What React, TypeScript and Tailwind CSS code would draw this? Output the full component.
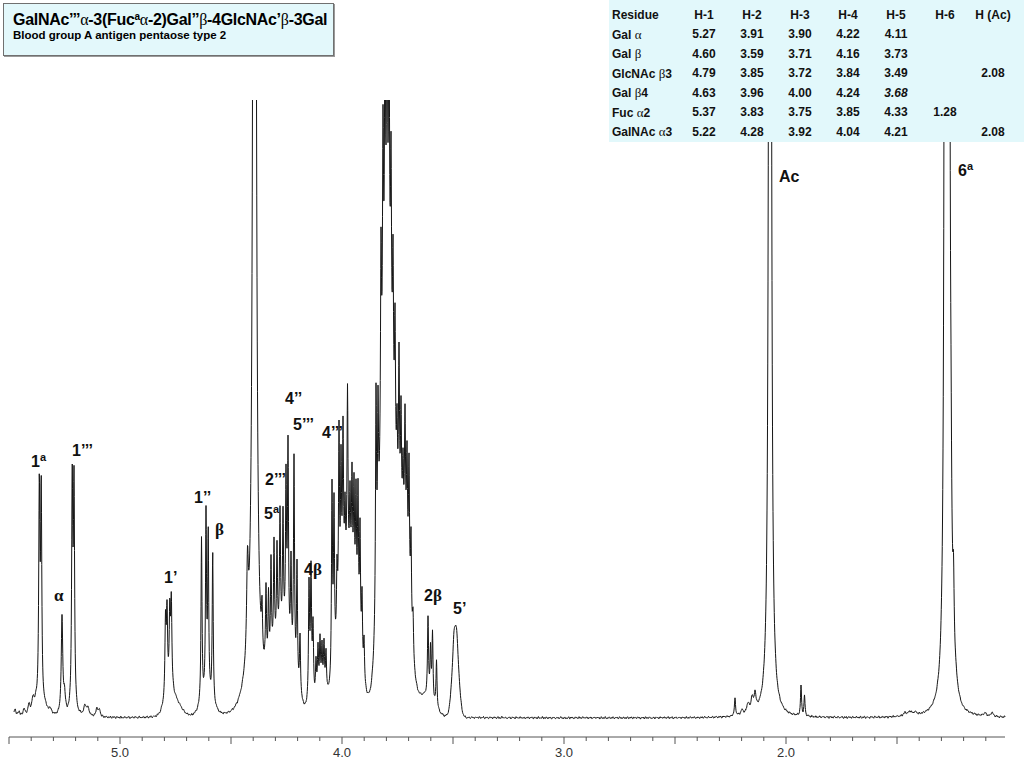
import { useMemo } from "react";

type Peak = [number, number, number];

// [x, height, half-width] in page pixels
const lines: Peak[] = [
  [15, 8, 1.2], [19, 5, 1], [24, 7, 1.2], [29, 10, 1.3], [33, 14, 1.5],
  [36, 10, 2], [39.3, 215, 0.7], [41.2, 215, 0.7], [45, 8, 2], [50, 6, 2],
  [62, 97, 0.9], [64.5, 18, 1],
  [72.2, 222, 0.7], [74, 222, 0.7],
  [85, 10, 1.5], [88, 8, 1.5], [97, 9, 1.2], [99.5, 7, 1],
  [165.5, 75, 0.7], [167, 80, 0.7], [169.8, 76, 0.7], [171.3, 86, 0.7],
  [201.5, 165, 0.6], [206, 180, 0.6], [208.2, 160, 0.6], [212.7, 150, 0.6],
  [247.5, 90, 1], [254.5, 3000, 1],
  [262, 45, 0.6], [266, 80, 0.6], [268.5, 70, 0.6], [271, 100, 0.6], [274, 110, 0.6],
  [277, 95, 0.6], [280, 125, 0.6], [283, 120, 0.6], [286, 160, 0.6], [288, 198, 0.6],
  [291, 95, 0.6], [294, 215, 0.6], [297, 120, 0.6], [300, 60, 0.6],
  [309, 110, 0.6], [311, 115, 0.6], [313, 65, 0.6],
  [316, 35, 0.6], [318, 45, 0.6], [320, 50, 0.6], [322, 42, 0.6], [324, 46, 0.6], [326, 40, 0.6],
  [332, 190, 0.6], [334, 160, 0.6], [337, 70, 0.6], [339, 190, 0.6], [341, 140, 0.6],
  [343, 160, 0.6], [345, 70, 0.6], [347.5, 185, 0.6], [350, 80, 0.6], [352, 110, 0.6],
  [354, 110, 0.6], [356, 120, 0.6], [358, 140, 0.6], [360, 120, 0.6], [362, 70, 0.6], [364, 40, 0.6],
  [376, 220, 0.6], [378, 150, 0.6], [381, 200, 0.6], [383, 240, 0.6], [385, 300, 0.6],
  [387, 320, 0.6], [389, 300, 0.6], [391, 200, 0.6], [393, 160, 0.6], [395, 150, 0.6],
  [397, 80, 0.6], [399, 170, 0.6], [401, 120, 0.6], [403, 70, 0.6], [405, 130, 0.6],
  [407, 110, 0.6], [409, 130, 0.6], [411, 90, 0.6], [413, 40, 0.6],
  [428, 78, 0.6], [430.5, 48, 0.6], [432.5, 68, 0.6], [436.5, 48, 0.6],
  [454, 10, 1], [456.5, 8, 1],
  [735, 17, 0.7], [742, 5, 1.5], [748, 10, 1.5], [752, 14, 1.2], [755, 17, 1.2],
  [770, 4000, 0.7],
  [801, 30, 0.6], [804.5, 20, 0.6],
  [905, 3, 2], [910, 4, 2], [915, 3, 2],
  [945.5, 4000, 0.6], [948.5, 4000, 0.6], [951, 80, 0.7], [953.5, 60, 0.7],
  [985, 3, 1.5], [992, 4, 1.5],
];

// broad humps under the multiplets
const humps: Peak[] = [
  [169, 15, 5], [176, 12, 6], [207, 15, 6], [252, 25, 8],
  [282, 70, 10], [311, 20, 2], [321, 20, 5], [348, 130, 9],
  [387, 380, 6.5], [404, 150, 6], [425, 20, 8], [455.5, 85, 3], [951, 25, 4],
];

const BASE = 718;
const TOP = 100;

const signal = (x: number, rnd: () => number) => {
  let v = 0;
  for (const [x0, h, w] of lines) {
    const dx = x - x0;
    v += (h * w * w) / (dx * dx + w * w);
  }
  for (const [x0, h, s] of humps) {
    const dx = x - x0;
    v += h * Math.exp(-(dx * dx) / (2 * s * s));
  }
  const noise = 0.5 * Math.sin(x * 1.7) + 0.4 * Math.sin(x * 3.1 + 1) + (rnd() - 0.5) * 0.9;
  return BASE - v + noise;
};

const buildTrace = () => {
  let seed = 7;
  const rnd = () => {
    seed = (seed * 1103515245 + 12345) % 2147483648;
    return seed / 2147483648;
  };
  let d = "";
  let prevX = 14;
  let prevY = signal(14, rnd);
  let pen = prevY >= TOP;
  if (pen) d += `M${prevX} ${prevY.toFixed(2)}`;
  for (let x = 14.25; x <= 1005; x += 0.25) {
    const y = signal(x, rnd);
    if (y >= TOP) {
      if (!pen) {
        const cx = prevX + ((TOP - prevY) / (y - prevY)) * (x - prevX);
        d += `M${cx.toFixed(2)} ${TOP}`;
        pen = true;
      }
      d += `L${x.toFixed(2)} ${y.toFixed(2)}`;
    } else if (pen) {
      const cx = prevX + ((prevY - TOP) / (prevY - y)) * (x - prevX);
      d += `L${cx.toFixed(2)} ${TOP}`;
      pen = false;
    }
    prevX = x;
    prevY = y;
  }
  return d;
};

const ticks = Array.from({ length: 45 }, (_, i) => i);
const axisLabels = [
  { x: 120, t: "5.0" },
  { x: 342, t: "4.0" },
  { x: 564, t: "3.0" },
  { x: 786, t: "2.0" },
];

const Gk = ({ children }: { children: string }) => (
  <span className="font-['Liberation_Serif',serif] font-normal">{children}</span>
);

const rows: { name: string; greek: string; suffix: string; v: string[] }[] = [
  { name: "Gal ", greek: "α", suffix: "", v: ["5.27", "3.91", "3.90", "4.22", "4.11", "", ""] },
  { name: "Gal ", greek: "β", suffix: "", v: ["4.60", "3.59", "3.71", "4.16", "3.73", "", ""] },
  { name: "GlcNAc ", greek: "β", suffix: "3", v: ["4.79", "3.85", "3.72", "3.84", "3.49", "", "2.08"] },
  { name: "Gal ", greek: "β", suffix: "4", v: ["4.63", "3.96", "4.00", "4.24", "3.68", "", ""] },
  { name: "Fuc ", greek: "α", suffix: "2", v: ["5.37", "3.83", "3.75", "3.85", "4.33", "1.28", ""] },
  { name: "GalNAc ", greek: "α", suffix: "3", v: ["5.22", "4.28", "3.92", "4.04", "4.21", "", "2.08"] },
];

const heads = ["H-1", "H-2", "H-3", "H-4", "H-5", "H-6", "H (Ac)"];

const ShiftTable = () => (
  <div className="w-[415px] h-[142px] bg-[#e2f8fb] pt-[5px] text-[12px] font-bold text-[#111]">
    <div className="grid grid-cols-[71px_48px_48px_48px_48px_48px_50px_46px] auto-rows-[19.5px] items-center">
      <div className="pl-[3px]">Residue</div>
      {heads.map((h) => (
        <div key={h} className="text-center whitespace-nowrap">
          {h}
        </div>
      ))}
      {rows.map((r) => [
        <div key={r.name + r.greek + r.suffix} className="pl-[3px] whitespace-nowrap">
          {r.name}
          <span className="text-[13px]">
            <Gk>{r.greek}</Gk>
          </span>
          {r.suffix}
        </div>,
        ...r.v.map((v, i) => (
          <div key={r.name + r.suffix + i} className={v === "3.68" ? "text-center italic" : "text-center"}>
            {v}
          </div>
        )),
      ])}
    </div>
  </div>
);

const TitleBox = () => (
  <div className="ml-[3px] mt-[3px] w-[331px] h-[53px] border border-[#707070] bg-[#e3f8fb] shadow-[1px_1px_0_#9a9a9a] px-[9px] pt-[6px] font-bold text-black">
    <div className="text-[16px] leading-[20px] tracking-[-0.3px] whitespace-nowrap">
      GalNAc’’’<Gk>α</Gk>-3(Fuc<sup className="text-[10px]">a</sup>
      <Gk>α</Gk>-2)Gal’’<Gk>β</Gk>-4GlcNAc’<Gk>β</Gk>-3Gal
    </div>
    <div className="-mt-[2px] text-[11.5px] leading-[14px] whitespace-nowrap">
      Blood group A antigen pentaose type 2
    </div>
  </div>
);

type Lbl = { x: number; y: number; main: string; sup?: string; greek?: string };

const peakLabels: Lbl[] = [
  { x: 31, y: 467, main: "1", sup: "a" },
  { x: 54, y: 601, main: "", greek: "α" },
  { x: 72, y: 456, main: "1’’’" },
  { x: 164, y: 583, main: "1’" },
  { x: 194, y: 503, main: "1’’" },
  { x: 215, y: 535, main: "", greek: "β" },
  { x: 264, y: 519, main: "5", sup: "a" },
  { x: 265, y: 485, main: "2’’’" },
  { x: 285, y: 404, main: "4’’" },
  { x: 293, y: 430, main: "5’’’" },
  { x: 322, y: 438, main: "4’’’" },
  { x: 304, y: 575, main: "4", greek: "β" },
  { x: 424, y: 601, main: "2", greek: "β" },
  { x: 453, y: 614, main: "5’" },
  { x: 779, y: 182, main: "Ac" },
  { x: 958, y: 176, main: "6", sup: "a" },
];

const Spectrum = () => {
  const trace = useMemo(buildTrace, []);
  return (
    <svg className="absolute inset-0" width={1024} height={768} viewBox="0 0 1024 768">
      <path d={trace} fill="none" stroke="#151515" strokeWidth={1} strokeLinejoin="round" />
      <line x1={9} x2={1005} y1={737} y2={737} stroke="#555" strokeWidth={1} />
      {ticks.map((i) => {
        const x = 9 + i * 22.2;
        return <line key={i} x1={x} x2={x} y1={737} y2={i % 5 === 0 ? 744 : 741} stroke="#555" strokeWidth={1} />;
      })}
      {axisLabels.map((l) => (
        <text key={l.t} x={l.x} y={757} textAnchor="middle" fontSize={13} fill="#333" fontFamily="Liberation Sans, sans-serif">
          {l.t}
        </text>
      ))}
      {peakLabels.map((l, i) => (
        <text key={i} x={l.x} y={l.y} fontSize={16} fontWeight={700} fill="#111" fontFamily="Liberation Sans, sans-serif">
          {l.main}
          {l.sup && (
            <tspan fontSize={11} dy={-6}>
              {l.sup}
            </tspan>
          )}
          {l.greek && (
            <tspan fontFamily="Liberation Serif, serif" fontWeight={700} fontSize={17}>
              {l.greek}
            </tspan>
          )}
        </text>
      ))}
    </svg>
  );
};

export default function App() {
  return (
    <div className="relative w-[1024px] h-[768px] overflow-hidden bg-white font-['Liberation_Sans',sans-serif]">
      <Spectrum />
      <div className="relative flex items-start justify-between">
        <TitleBox />
        <ShiftTable />
      </div>
    </div>
  );
}
